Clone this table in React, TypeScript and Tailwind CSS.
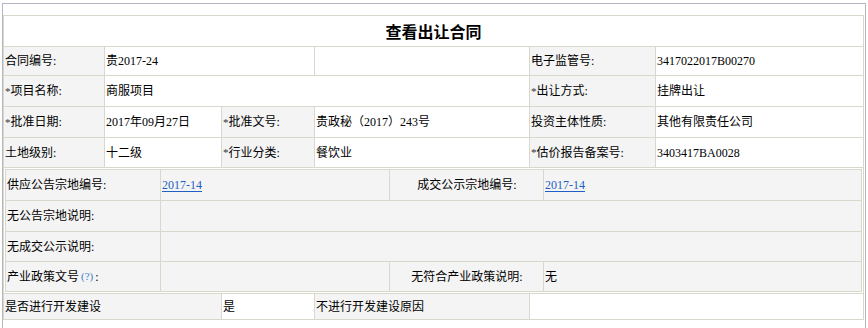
import React from 'react';

type CellProps = {
  children?: React.ReactNode;
  className?: string;
};

function Label({ children, className = '' }: CellProps) {
  return (
    <div className={`flex items-center bg-[#f4f4f4] pl-px ${className}`}>
      {children}
    </div>
  );
}

function Value({ children, className = '' }: CellProps) {
  return <div className={`flex items-center bg-white pl-px ${className}`}>{children}</div>;
}

function Star() {
  return <span className="text-[11px] text-[#333]">*</span>;
}

function NumLink({ children }: CellProps) {
  return <span className="text-[#1d5fc4] underline underline-offset-2">{children}</span>;
}

export default function App() {
  return (
    <div className="min-h-[328px] bg-white text-[12px] leading-none text-black [font-family:'Liberation_Serif','Noto_Sans_CJK_SC',serif]">
      <div className="ml-[2px] mt-[3px] min-h-[325px] w-[864px] border-l border-r border-t border-[#b3b7bf] pt-[11px]">
        <div className="grid w-[861px] grid-cols-[100px_116px_92px_214px_125px_207px] gap-px bg-[#d8d8cc] p-px">
          {/* title */}
          <div className="col-span-6 flex h-[30px] items-center justify-center bg-white text-[16px] font-bold [font-family:'Noto_Sans_CJK_SC',sans-serif]">
            查看出让合同
          </div>

          {/* row 1 */}
          <Label className="h-[28px]">合同编号:</Label>
          <Value className="col-span-2">贵2017-24</Value>
          <Value />
          <Label>电子监管号:</Label>
          <Value>3417022017B00270</Value>

          {/* row 2 */}
          <Label className="h-[30px]">
            <Star />
            项目名称:
          </Label>
          <Value className="col-span-3">商服项目</Value>
          <Label>
            <Star />
            出让方式:
          </Label>
          <Value>挂牌出让</Value>

          {/* row 3 */}
          <Label className="h-[30px]">
            <Star />
            批准日期:
          </Label>
          <Value>2017年09月27日</Value>
          <Label>
            <Star />
            批准文号:
          </Label>
          <Value>贵政秘（2017）243号</Value>
          <Label>投资主体性质:</Label>
          <Value>其他有限责任公司</Value>

          {/* row 4 */}
          <Label className="h-[29px]">土地级别:</Label>
          <Value>十二级</Value>
          <Label>
            <Star />
            行业分类:
          </Label>
          <Value>餐饮业</Value>
          <Label>
            <Star />
            估价报告备案号:
          </Label>
          <Value>3403417BA0028</Value>

          {/* nested block */}
          <div className="col-span-6 bg-white p-px">
            <div className="grid grid-cols-[154px_228px_153px_317px] gap-px bg-[#d8d8cc] p-px">
              <Label className="h-[30px]">供应公告宗地编号:</Label>
              <Label>
                <NumLink>2017-14</NumLink>
              </Label>
              <Label className="justify-center">成交公示宗地编号:</Label>
              <Label>
                <NumLink>2017-14</NumLink>
              </Label>

              <Label className="h-[30px]">无公告宗地说明:</Label>
              <Label className="col-span-3" />

              <Label className="h-[29px]">无成交公示说明:</Label>
              <Label className="col-span-3" />

              <Label className="h-[29px]">
                产业政策文号
                <span className="mx-[2px] text-[11px] text-[#3d7fd0]">(?)</span>:
              </Label>
              <Label />
              <Label className="justify-center">无符合产业政策说明:</Label>
              <Label>无</Label>
            </div>
          </div>

          {/* last row */}
          <Label className="col-span-2 h-[25px]">是否进行开发建设</Label>
          <Value>是</Value>
          <Label>不进行开发建设原因</Label>
          <Value className="col-span-2" />
        </div>
      </div>
    </div>
  );
}
